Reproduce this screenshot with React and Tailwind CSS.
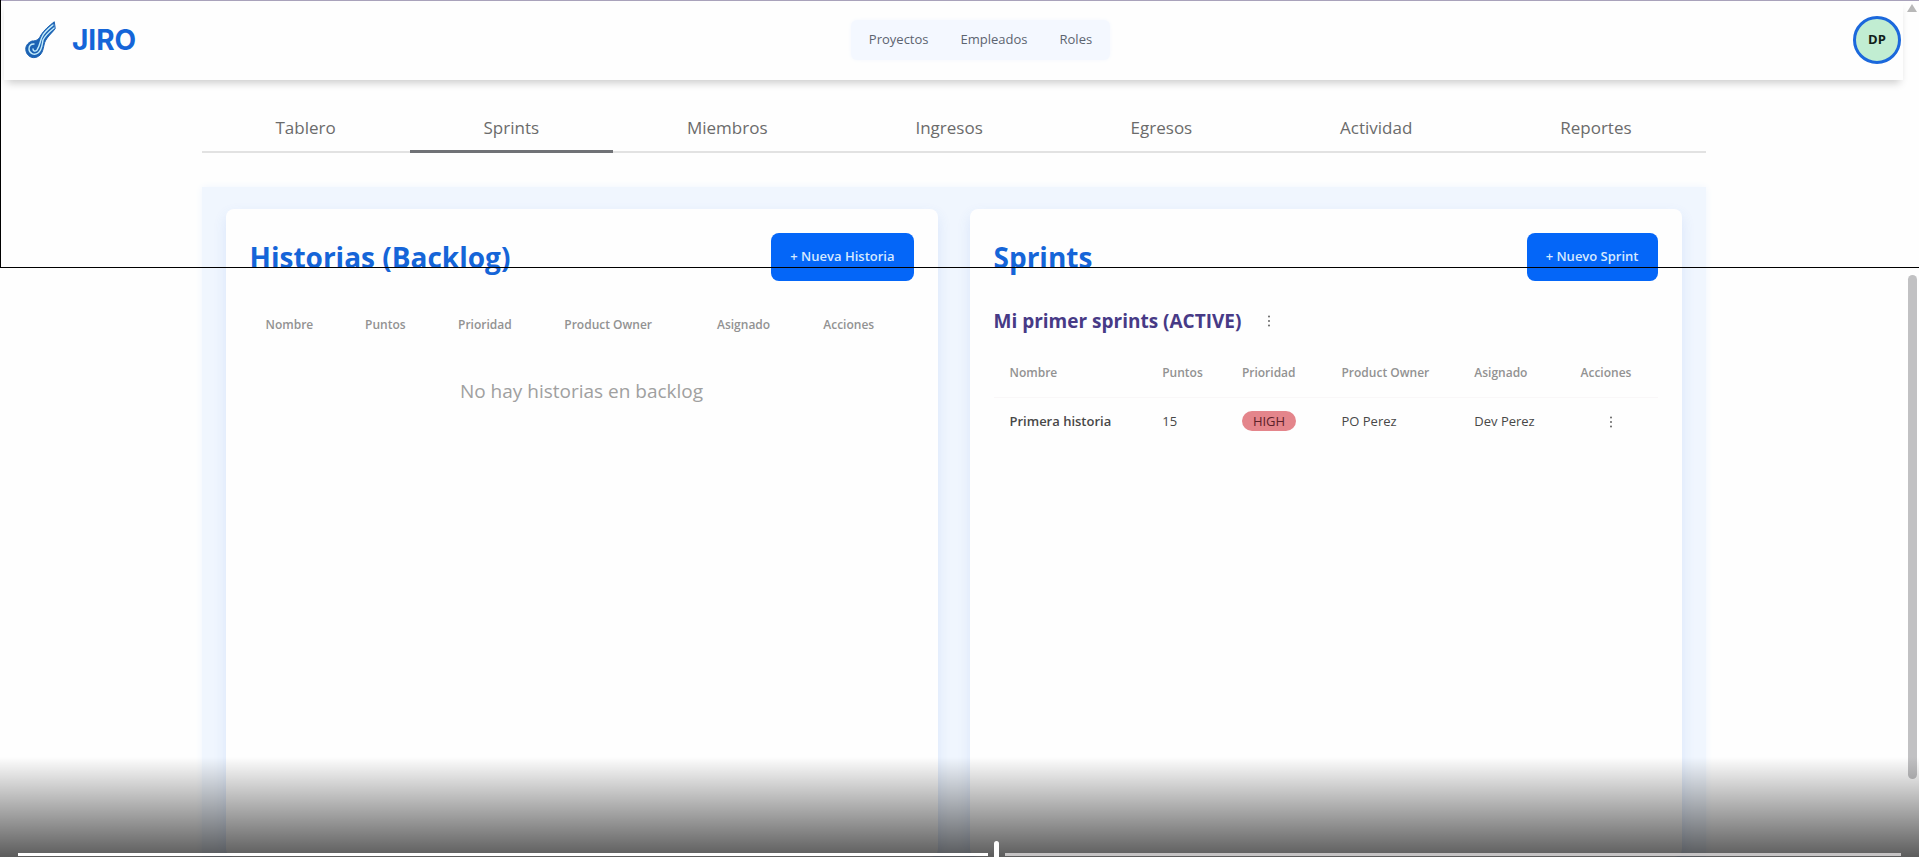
import React from 'react';

const tabs = ['Tablero', 'Sprints', 'Miembros', 'Ingresos', 'Egresos', 'Actividad', 'Reportes'];
const columns = ['Nombre', 'Puntos', 'Prioridad', 'Product Owner', 'Asignado', 'Acciones'];

const stories = [
    { name: 'Primera historia', points: 15, priority: 'HIGH', owner: 'PO Perez', assignee: 'Dev Perez' },
];

function Logo() {
    return (
        <svg viewBox="0 0 32 40" className="h-10 w-8" fill="none" strokeLinecap="round" strokeLinejoin="round" aria-hidden="true">
            <path d="M30 2C25 6 20 10 17 15C15 19 13 21 8 21C3 23 1 27 2 31C3 36 8 39 13 37C18 35 19 30 20 25C21 19 26 15 31 9Z" fill="#1c63b4" stroke="#1c63b4" strokeWidth="1" />
            <path d="M29 5C24 9 20 12 18 17C16 21 16 26 13 30C11 32 9 31 9 29" stroke="#c3ecfb" strokeWidth="1.4" />
            <path d="M30 8C25 12 21 16 19 20C18 25 18 30 14 33C10 36 5 33 5 29C5 26 7 24 10 24" stroke="#c3ecfb" strokeWidth="1.4" />
        </svg>
    );
}

function MenuDots({ label }) {
    return (
        <button type="button" aria-label={label} className="inline-flex h-4 w-4 items-center justify-center align-middle text-[#666]">
            <svg viewBox="0 0 16 16" className="h-4 w-4" fill="currentColor">
                <circle cx="8" cy="3.5" r="1" />
                <circle cx="8" cy="8" r="1" />
                <circle cx="8" cy="12.5" r="1" />
            </svg>
        </button>
    );
}

function Header() {
    return (
        <header className="flex h-20 shrink-0 items-center justify-between bg-[#fefefe] pl-5 pr-[2px] shadow-[0_6px_8px_-3px_rgba(0,0,0,0.2)]">
            <a href="#" className="flex flex-1 items-center gap-4">
                <Logo />
                <span className="font-['Inter',sans-serif] text-[28px] font-bold text-[#1565d8]">JIRO</span>
            </a>
            <nav className="ml-9 flex h-10 items-center gap-8 rounded-md bg-[#f4f8ff] px-[18px] text-[13px] text-[#5c6470] shadow-[0_0_4px_#f4f8ff]">
                <a href="#">Proyectos</a>
                <a href="#">Empleados</a>
                <a href="#">Roles</a>
            </nav>
            <div className="flex flex-1 justify-end">
                <button type="button" className="h-12 w-12 rounded-full border-3 border-[#1b68dc] bg-[#c1edd2] text-[13px] font-bold text-[#101f1a]">DP</button>
            </div>
        </header>
    );
}

function Tabs() {
    return (
        <nav className="flex border-b-2 border-[#e2e2e2] text-[17px] leading-7">
            {tabs.map((tab) => (
                <a
                    key={tab}
                    href="#"
                    className={
                        tab === 'Sprints'
                            ? '-mb-[2px] flex-auto border-b-3 border-[#707276] pt-1 pb-2 text-center'
                            : 'flex-auto pt-1 pb-2 text-center'
                    }
                >
                    {tab}
                </a>
            ))}
        </nav>
    );
}

function StoryTable({ widths, rows }) {
    return (
        <table className="w-full table-fixed text-left text-[13px] text-[#484848]">
            <colgroup>
                {widths.map((width, i) => (
                    <col key={i} style={{ width: `${width}%` }} />
                ))}
            </colgroup>
            <thead>
                <tr>
                    {columns.map((column) => (
                        <th key={column} className="h-12 whitespace-nowrap pl-4 text-xs font-semibold text-[#929292]">{column}</th>
                    ))}
                </tr>
            </thead>
            <tbody>
                {rows.map((row) => (
                    <tr key={row.name} className="h-12 border-t border-[#f9f7f8] whitespace-nowrap">
                        <td className="pl-4 font-semibold">{row.name}</td>
                        <td className="pl-4">{row.points}</td>
                        <td className="pl-4">
                            <span className="inline-block h-5 rounded-full bg-[#e4858b] px-[11px] leading-5 text-[#5c2229]">{row.priority}</span>
                        </td>
                        <td className="pl-4">{row.owner}</td>
                        <td className="pl-4">{row.assignee}</td>
                        <td className="text-center"><MenuDots label="Acciones de la historia" /></td>
                    </tr>
                ))}
            </tbody>
        </table>
    );
}

function Card({ title, action, children }) {
    return (
        <section className="flex-1 basis-0 rounded-lg bg-[#fefefe] p-6 shadow-[0_6px_14px_rgba(60,110,220,0.12)]">
            <div className="flex items-center justify-between">
                <h2 className="text-[28px] font-bold text-[#1565d8]">{title}</h2>
                <button type="button" className="h-12 rounded-lg bg-[#0466f8] px-[19px] text-[13px] font-semibold text-[#d5e8ff]">{action}</button>
            </div>
            {children}
        </section>
    );
}

function PlayerBar() {
    return (
        <div className="absolute inset-x-0 bottom-0 flex h-[100px] items-end bg-linear-to-b from-transparent to-black/64 px-[18px]">
            <div className="flex h-4 w-full items-end">
                <div className="mb-[1px] h-[3px] w-[51.5%] bg-white" />
                <div className="mx-[6px] h-4 w-[5px] rounded-t-full bg-white" />
                <div className="mb-[1px] h-[3px] flex-1 bg-[#c5c3c4]" />
            </div>
            <input type="range" aria-label="Progreso" defaultValue="52" className="absolute inset-x-4 bottom-0 h-4 opacity-0" />
        </div>
    );
}

export default function App() {
    return (
        <div className="relative flex h-screen flex-col overflow-hidden bg-[#fefefe] font-['Open_Sans','Noto_Sans',sans-serif]">
            <div className="flex flex-1 flex-col pr-4 pl-1">
                <Header />
                <main className="mx-auto flex w-[79.2%] flex-1 flex-col pt-[30px] text-[#6b6b6b]">
                    <Tabs />
                    <div className="mt-[34px] flex flex-1 gap-8 bg-[#f0f6fe] px-6 pt-[22px] shadow-[0_0_8px_#f0f6fe]">
                        <Card title="Historias (Backlog)" action="+ Nueva Historia">
                            <div className="mt-5">
                                <StoryTable widths={[15, 14, 16, 23, 16, 16]} rows={[]} />
                            </div>
                            <p className="mt-7 text-center text-[19px] leading-7 text-[#a0a0a0]">No hay historias en backlog</p>
                        </Card>
                        <Card title="Sprints" action="+ Nuevo Sprint">
                            <div className="mt-[26px] flex items-center gap-5">
                                <h3 className="text-[19px] leading-7 font-bold text-[#473a86]">Mi primer sprints (ACTIVE)</h3>
                                <MenuDots label="Acciones del sprint" />
                            </div>
                            <div className="mt-[14px]">
                                <StoryTable widths={[23, 12, 15, 20, 16, 14]} rows={stories} />
                            </div>
                        </Card>
                    </div>
                </main>
            </div>

            {/* scrollbar */}
            <svg viewBox="0 0 10 8" className="absolute top-1 right-[2px] h-2 w-[10px]" fill="#b8b8b8" aria-hidden="true">
                <path d="M5 0L10 8H0Z" />
            </svg>
            <div className="absolute top-[275px] right-[2px] h-[504px] w-[9px] rounded-full bg-[#c1c1c3]" />

            {/* selection frame */}
            <div className="pointer-events-none absolute inset-x-0 top-0 h-[268px] border-b border-l border-black">
                <div className="h-px bg-[#a9a2bb]" />
            </div>

            <PlayerBar />
        </div>
    );
}
